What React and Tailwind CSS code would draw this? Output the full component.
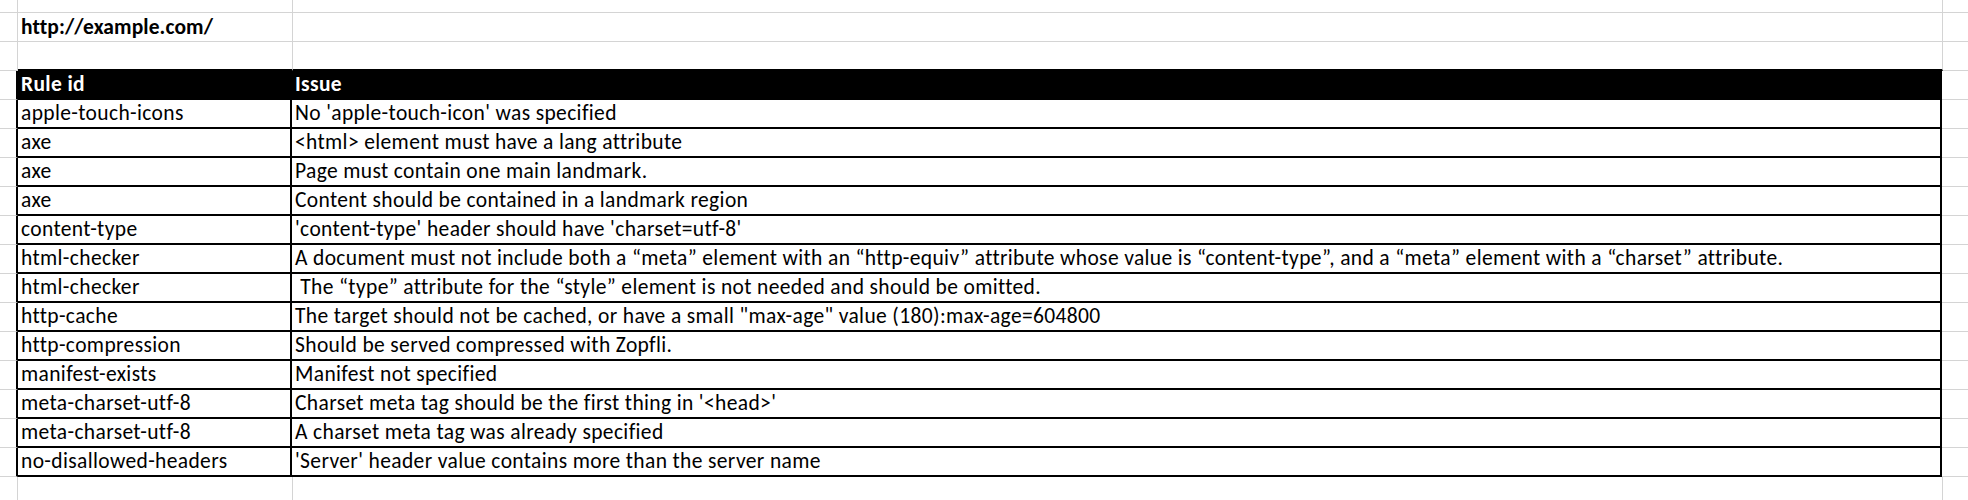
const rows = [
  ["apple-touch-icons", "No 'apple-touch-icon' was specified"],
  ["axe", "<html> element must have a lang attribute"],
  ["axe", "Page must contain one main landmark."],
  ["axe", "Content should be contained in a landmark region"],
  ["content-type", "'content-type' header should have 'charset=utf-8'"],
  [
    "html-checker",
    "A document must not include both a \u201cmeta\u201d element with an \u201chttp-equiv\u201d attribute whose value is \u201ccontent-type\u201d, and a \u201cmeta\u201d element with a \u201ccharset\u201d attribute.",
  ],
  [
    "html-checker",
    "\u00a0The \u201ctype\u201d attribute for the \u201cstyle\u201d element is not needed and should be omitted.",
  ],
  ["http-cache", 'The target should not be cached, or have a small "max-age" value (180):max-age=604800'],
  ["http-compression", "Should be served compressed with Zopfli."],
  ["manifest-exists", "Manifest not specified"],
  ["meta-charset-utf-8", "Charset meta tag should be the first thing in '<head>'"],
  ["meta-charset-utf-8", "A charset meta tag was already specified"],
  ["no-disallowed-headers", "'Server' header value contains more than the server name"],
];

// plain sheet row, light gridlines only
function SheetRow({ h = "h-[29px]", b = null, boldB = false, blackBottom = false }) {
  const bottom = blackBottom ? "border-b-2 border-b-black" : "border-b border-b-[#d4d4d4]";
  return (
    <div className={`flex ${h}`}>
      <div className="w-[18px] shrink-0 border-r border-b border-[#d4d4d4]" />
      <div
        className={`w-[275px] shrink-0 border-r border-r-[#d4d4d4] ${bottom} flex items-end pl-[3px] pb-[3px] whitespace-nowrap ${
          boldB ? "font-bold tracking-[0.1px]" : ""
        }`}
      >
        {b}
      </div>
      <div className={`w-[1650px] shrink-0 border-r border-r-[#d4d4d4] ${bottom}`} />
      <div className="flex-1 border-b border-[#d4d4d4]" />
    </div>
  );
}

function TableRow({ id, issue, head = false }) {
  const cell = head
    ? "bg-black text-white font-bold"
    : "bg-white text-black";
  return (
    <div className="flex h-[29px]">
      <div className="w-[18px] shrink-0 border-r-2 border-r-black border-b border-b-[#d4d4d4]" />
      <div
        className={`w-[274px] shrink-0 border-r-2 border-r-black border-b-2 border-b-black flex items-end pl-[3px] pb-[3px] whitespace-nowrap ${cell}`}
      >
        {id}
      </div>
      <div
        className={`w-[1650px] shrink-0 border-r-2 border-r-black border-b-2 border-b-black flex items-end pl-[3px] pb-[3px] whitespace-pre ${cell}`}
      >
        {issue}
      </div>
      <div className="flex-1 border-b border-[#d4d4d4]" />
    </div>
  );
}

export default function App() {
  return (
    <div
      className="w-[1968px] h-[500px] overflow-hidden bg-white text-black text-[21.5px] leading-[22px] tracking-[0.36px]"
      style={{ fontFamily: "Carlito, Lato, 'Liberation Sans', sans-serif" }}
    >
      <SheetRow h="h-[13px]" />
      <SheetRow b="http://example.com/" boldB />
      <SheetRow blackBottom />
      <TableRow id="Rule id" issue="Issue" head />
      {rows.map(([id, issue], i) => (
        <TableRow key={i} id={id} issue={issue} />
      ))}
      <SheetRow />
    </div>
  );
}
